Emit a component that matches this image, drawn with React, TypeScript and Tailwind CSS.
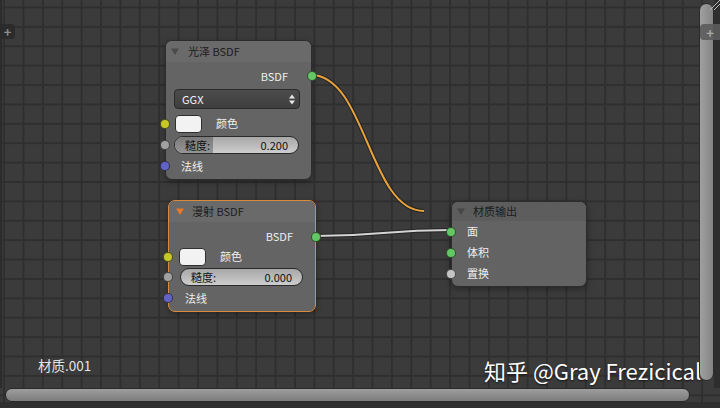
import React from "react";

const Socket = ({ color, side }: { color: string; side: "l" | "r" }) => (
  <span
    className={
      "absolute top-1/2 -translate-y-1/2 w-[10px] h-[10px] rounded-full border border-[#1e1e1e]/70 " +
      (side === "l" ? "left-[-6px]" : "right-[-6px]")
    }
    style={{ backgroundColor: color }}
  />
);

const Tri = ({ color }: { color: string }) => (
  <svg width="8" height="7" viewBox="0 0 8 7" className="shrink-0">
    <path d="M0 0.5H8L4 7Z" fill={color} />
  </svg>
);

const Slider = ({ value, fill }: { value: string; fill: number }) => (
  <div className="relative h-full rounded-full border border-[#2a2a2a] bg-gradient-to-b from-[#a8a8a8] to-[#cdcdcd] overflow-hidden flex items-center justify-between px-[10px] text-[11px] text-[#111]">
    {fill > 0 && (
      <div
        className="absolute left-0 top-0 bottom-0 bg-gradient-to-b from-[#7a7a7a] to-[#959595]"
        style={{ width: fill }}
      />
    )}
    <span className="relative">糙度:</span>
    <span className="relative">{value}</span>
  </div>
);

const Row = ({ children, className }: { children: React.ReactNode; className: string }) => (
  <div className={"relative flex items-center text-[11px] text-[#efefef] " + className}>{children}</div>
);

export default function App() {
  return (
    <div className="relative w-[720px] h-[408px] overflow-hidden flex flex-col bg-[#3b3b3b] bg-[image:linear-gradient(to_right,#2f2f2f_1.5px,transparent_1.5px),linear-gradient(to_bottom,#2f2f2f_1.5px,transparent_1.5px)] bg-[length:19.4px_19.4px] bg-size-[19.4px_19.4px] bg-[position:22.5px_6.5px] bg-position-[22.5px_6.5px] font-['Noto_Sans_CJK_SC','Noto_Sans',sans-serif]">
      {/* main area */}
      <div className="flex-1 flex min-h-0">
        <div className="w-[2px] bg-[#2c2c2c]" />
        {/* canvas */}
        <div className="relative flex-1 flex flex-col justify-between pt-[24px] pb-[14px]">
          {/* left + tab */}
          <div className="ml-[-2px] w-[15px] h-[15px] rounded-r-[4px] bg-[#2b2b2b] flex items-center justify-center text-[#8c8c8c] text-[13px] font-bold leading-none">
            +
          </div>

          {/* links */}
          <svg className="absolute left-[-2px] top-0" width="720" height="408">
            <path d="M311 75 C 366 75, 369 211, 424 211" fill="none" stroke="#1c1c1c" strokeOpacity="0.7" strokeWidth="4" />
            <path d="M311 75 C 366 75, 369 211, 424 211" fill="none" stroke="#e8a23c" strokeWidth="2" />
            <path d="M315 236 C 383 236, 383 230, 451 230" fill="none" stroke="#1c1c1c" strokeOpacity="0.7" strokeWidth="4" />
            <path d="M315 236 C 383 236, 383 230, 451 230" fill="none" stroke="#d4d4d4" strokeWidth="2" />
          </svg>

          {/* Node 1: 光泽 BSDF */}
          <div className="absolute left-[163px] top-[40px] w-[147px] h-[140px] rounded-[7px] bg-[#646464] border border-[#2c2c2c] shadow-[0_2px_6px_rgba(0,0,0,0.35)] flex flex-col">
            <div className="h-[21px] rounded-t-[6px] bg-[#6a6a6a] flex items-center pl-[5px] gap-[9px] text-[11px] text-[#1c1c1c]">
              <Tri color="#4a4a4a" />
              <span>光泽 BSDF</span>
            </div>
            <Row className="mt-[4px] h-[20px] justify-end pr-[23px]">
              BSDF
              <Socket color="#63c763" side="r" />
            </Row>
            <div className="mt-[3px] mx-[8px] mr-[11px] h-[20px] rounded-[4px] border border-[#2a2a2a] bg-gradient-to-b from-[#4c4c4c] to-[#3e3e3e] flex items-center justify-between pl-[7px] pr-[4px] text-[11px] text-[#f2f2f2]">
              <span>GGX</span>
              <svg width="6" height="11" viewBox="0 0 6 11">
                <path d="M0 4.5L3 0.5L6 4.5Z" fill="#e6e6e6" />
                <path d="M0 6.5L3 10.5L6 6.5Z" fill="#e6e6e6" />
              </svg>
            </div>
            <Row className="mt-[5px] h-[19px] pl-[9px] gap-[14px]">
              <Socket color="#c7c729" side="l" />
              <div className="w-[27px] h-[18px] rounded-[4px] bg-[#f2f2f2] border border-[#2f2f2f]" />
              <span>颜色</span>
            </Row>
            <Row className="mt-[3px] h-[18px] pl-[8px] pr-[12px]">
              <Socket color="#a1a1a1" side="l" />
              <div className="flex-1 h-full">
                <Slider value="0.200" fill={38} />
              </div>
            </Row>
            <Row className="mt-[3px] h-[18px] pl-[15px]">
              <Socket color="#6363c7" side="l" />
              法线
            </Row>
          </div>

          {/* Node 2: 漫射 BSDF (selected) */}
          <div className="absolute left-[166px] top-[200px] w-[148px] h-[112px] rounded-[7px] bg-[#646464] border border-[#d98a3c] shadow-[0_2px_6px_rgba(0,0,0,0.35)] flex flex-col">
            <div className="h-[21px] rounded-t-[6px] bg-[#6a6a6a] flex items-center pl-[7px] gap-[8px] text-[11px] text-[#1c1c1c]">
              <Tri color="#e8782a" />
              <span>漫射 BSDF</span>
            </div>
            <Row className="mt-[5px] h-[19px] justify-end pr-[22px]">
              BSDF
              <Socket color="#63c763" side="r" />
            </Row>
            <Row className="mt-[1px] h-[19px] pl-[10px] gap-[14px]">
              <Socket color="#c7c729" side="l" />
              <div className="w-[27px] h-[18px] rounded-[4px] bg-[#f2f2f2] border border-[#2f2f2f]" />
              <span>颜色</span>
            </Row>
            <Row className="mt-[2px] h-[18px] pl-[11px] pr-[12px]">
              <Socket color="#a1a1a1" side="l" />
              <div className="flex-1 h-full">
                <Slider value="0.000" fill={0} />
              </div>
            </Row>
            <Row className="mt-[3px] h-[18px] pl-[16px]">
              <Socket color="#6363c7" side="l" />
              法线
            </Row>
          </div>

          {/* Node 3: 材质输出 */}
          <div className="absolute left-[449px] top-[201px] w-[136px] h-[86px] rounded-[7px] bg-[#636363] border border-[#2c2c2c] shadow-[0_2px_6px_rgba(0,0,0,0.35)] flex flex-col">
            <div className="h-[19px] rounded-t-[6px] bg-[#5d5d5d] flex items-center pl-[5px] gap-[8px] text-[11px] text-[#1c1c1c]">
              <Tri color="#474747" />
              <span>材质输出</span>
            </div>
            <Row className="h-[21px] pl-[15px]">
              <Socket color="#63c763" side="l" />
              面
            </Row>
            <Row className="h-[21px] pl-[15px]">
              <Socket color="#63c763" side="l" />
              体积
            </Row>
            <Row className="h-[21px] pl-[15px]">
              <Socket color="#c4c4c4" side="l" />
              置换
            </Row>
          </div>

          {/* material name */}
          <div className="pl-[36px] text-[13.5px] text-[#e4e4e4] leading-[18px]">材质.001</div>

          {/* watermark */}
          <div className="absolute left-[482px] top-[357px] whitespace-nowrap text-[22px] leading-[26px] text-white [text-shadow:0_1px_2px_rgba(0,0,0,0.7)]">
            知乎 @Gray Frezicical
          </div>
        </div>

        {/* vertical scrollbar column */}
        <div className="relative w-[15px] pt-[3px] pb-[7px] flex flex-col">
          <div className="flex-1 rounded-full border border-[#2a2a2a] bg-gradient-to-r from-[#a0a0a0] to-[#848484]" />
        </div>
        <div className="w-[6px] bg-[#2e2e2e]" />

        {/* right + tab and corner widget (overlays) */}
        <div className="absolute right-0 top-[24px] w-[20px] h-[16px] rounded-l-[4px] bg-[#5c5c5c]/90 flex items-center justify-center text-[#a8a8a8] text-[13px] font-bold leading-none">
          +
        </div>
        <svg className="absolute right-0 top-0" width="16" height="10" viewBox="0 0 16 10">
          <path d="M6 10L16 0M10 10L16 4" stroke="#bdbdbd" strokeWidth="1" />
        </svg>
      </div>

      {/* horizontal scrollbar */}
      <div className="h-[14px] pl-[5px] pr-[30px] flex">
        <div className="flex-1 rounded-full border border-[#2a2a2a] bg-gradient-to-b from-[#9e9e9e] to-[#7c7c7c]" />
      </div>
      <div className="h-[6px] bg-[#2f2f2f]" />
    </div>
  );
}
